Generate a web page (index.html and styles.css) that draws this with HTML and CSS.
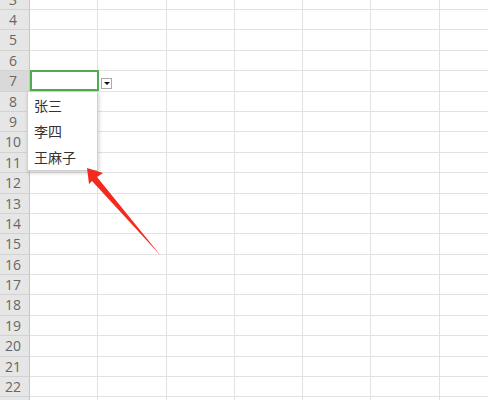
FILE: index.html
```html
<!DOCTYPE html>
<html lang="zh-CN">
<head>
  <meta charset="UTF-8">
  <title>下拉列表</title>
  <link rel="stylesheet" href="styles.css">
</head>
<body>
  <div class="sheet" id="sheet"></div>

  <div class="cell-active"></div>
  <div class="drop-btn"><span class="tri"></span></div>
  <ul class="drop-list">
    <li>张三</li>
    <li>李四</li>
    <li>王麻子</li>
  </ul>

  <svg class="arrow" width="488" height="400" viewBox="0 0 488 400">
    <polygon points="87,168 103,173 97,177 161,256 92,181 89,184" fill="#f42a1e"/>
  </svg>

  <script>
    const sheet = document.getElementById("sheet");
    let html = "";
    for (let r = 3; r <= 23; r++) {
      html += `<div class="row${r === 7 ? " sel" : ""}"><div class="rh">${r}</div>`;
      for (let c = 0; c < 7; c++) html += `<div class="cell"></div>`;
      html += `</div>`;
    }
    sheet.innerHTML = html;
  </script>
</body>
</html>
```

FILE: styles.css
```css
html, body { margin: 0; padding: 0; }
body { width: 488px; height: 400px; overflow: hidden; background: #fff; position: relative; font-family: "Open Sans", "Liberation Sans", sans-serif; }
.sheet { margin-top: -10.4px; }
.row { display: flex; height: 20.4px; box-sizing: border-box; border-bottom: 1px solid #e2e2e2; }
.rh {
  width: 30px; flex: none; box-sizing: border-box; background: #e6e6e6; border-right: 1px solid #c6c6c6;
  color: #666; font-size: 14px; line-height: 20px; text-align: center; padding-right: 3px;
}
.row { border-bottom-color: #e2e2e2; }
.row .rh { border-bottom: 1px solid #d2d2d2; margin-bottom: -1px; }
.row.sel .rh { background: #d9d9d9; }
.cell { width: 68.3px; flex: none; box-sizing: border-box; border-right: 1px solid #e2e2e2; }
.cell-active {
  position: absolute; left: 30px; top: 70px; width: 69px; height: 21px; box-sizing: border-box;
  border: 2px solid #4ead4e;
}
.drop-btn {
  position: absolute; left: 101px; top: 78px; width: 11px; height: 11px; box-sizing: border-box;
  border: 1px solid #a9a9a9; background: #fff; display: flex; align-items: center; justify-content: center;
}
.tri { width: 0; height: 0; border-left: 3px solid transparent; border-right: 3px solid transparent; border-top: 3px solid #111; }
.drop-list {
  position: absolute; left: 27px; top: 91px; width: 71px; margin: 0; padding: 0; list-style: none;
  box-sizing: border-box; background: #fff; border: 1px solid #cfcfcf; box-shadow: 1px 2px 4px rgba(0,0,0,0.18);
}
.drop-list li {
  height: 26px; line-height: 26px; padding-left: 6px; font-size: 14px; color: #333;
  font-family: "Noto Sans CJK SC", sans-serif;
}
.arrow { position: absolute; left: 0; top: 0; pointer-events: none; }
```
